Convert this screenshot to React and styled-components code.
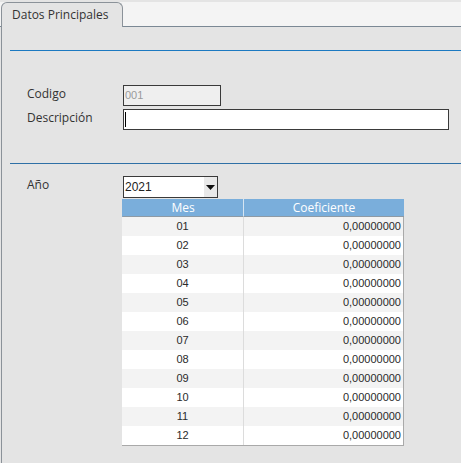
import React from 'react';
import styled, { createGlobalStyle } from 'styled-components';

const GlobalStyle = createGlobalStyle`
    html, body {
        margin: 0;
        padding: 0;
        background: #e4e4e4;
    }
    body {
        font-family: "Open Sans", "Liberation Sans", sans-serif;
    }
`;

const Page = styled.div`
    width: 461px;
    height: 463px;
    overflow: hidden;
    background: #e4e4e4;
    display: flex;
    flex-direction: column;
`;

const TabStrip = styled.div`
    margin-top: 2px;
    height: 24px;
    padding-left: 1px;
    display: flex;
    align-items: flex-end;
    background: #f4f4f4;
    border-bottom: 1px solid #7b8894;
`;

const Tab = styled.div`
    box-sizing: border-box;
    width: 122px;
    height: 25px;
    margin-bottom: -1px;
    padding: 3px 0 0 10px;
    background: #e4e4e4;
    border: 1px solid #8b9299;
    border-bottom: none;
    border-radius: 6px 6px 0 0;
    font-size: 12px;
    color: #333;
`;

const Panel = styled.div`
    flex: 1;
    margin-left: 1px;
    padding: 23px 0 0 8px;
    border-left: 1px solid #8b9299;
`;

const Rule = styled.div`
    height: 1px;
    background: ${({ $dark }) => ($dark ? '#2f70a6' : '#1c79c1')};
    margin-top: ${({ $top }) => $top}px;
`;

const FormGrid = styled.div`
    display: grid;
    grid-template-columns: 96px auto;
    grid-auto-rows: 21px;
    row-gap: 3px;
    margin: ${({ $top }) => $top}px 0 0 17px;
`;

const Label = styled.div`
    font-size: 12px;
    line-height: 17px;
    color: #333;
`;

const TextBox = styled.div`
    position: relative;
    box-sizing: border-box;
    width: ${({ $w }) => $w}px;
    height: 21px;
    border: 1px solid #3a3a3a;
    background: ${({ $disabled }) => ($disabled ? '#efefef' : '#fff')};
    font-family: "Liberation Sans", Arial, sans-serif;
    font-size: 11px;
    line-height: 19px;
    padding-left: 1px;
    color: ${({ $disabled }) => ($disabled ? '#9a9a9a' : '#222')};
`;

const Caret = styled.span`
    position: absolute;
    left: 1px;
    top: 2px;
    width: 1px;
    height: 15px;
    background: #000;
`;

const Select = styled.div`
    box-sizing: border-box;
    width: 95px;
    height: 22px;
    border: 1px solid #3a3a3a;
    background: #fff;
    display: flex;
    align-items: stretch;
    font-family: "Liberation Sans", Arial, sans-serif;
    font-size: 12px;
    color: #222;
`;

const SelectValue = styled.div`
    flex: 1;
    padding-left: 1px;
    line-height: 20px;
`;

const SelectButton = styled.div`
    width: 13px;
    background: #e9e9e9;
    display: flex;
    align-items: center;
    justify-content: center;
`;

const Table = styled.div`
    width: 282px;
    margin: 2px 0 0 112px;
    display: grid;
    grid-template-columns: 121px 161px;
    border-bottom: 1px solid #a9a9a9;
`;

const HeadCell = styled.div`
    height: 17px;
    line-height: 17px;
    background: #7aaedb;
    color: #fff;
    text-align: center;
    font-size: 12px;
    border-left: 1px solid ${({ $first }) => ($first ? '#7aaedb' : '#d6e5f2')};
    border-bottom: 1px solid #8d9aa5;
`;

const Cell = styled.div`
    height: 19px;
    line-height: 19px;
    box-sizing: border-box;
    background: ${({ $odd }) => ($odd ? '#f3f3f3' : '#fff')};
    font-family: "Liberation Sans", Arial, sans-serif;
    font-size: 11px;
    color: #2a2a2a;
    text-align: ${({ $right }) => ($right ? 'right' : 'center')};
    padding-right: ${({ $right }) => ($right ? '2px' : '0')};
    border-left: ${({ $right }) => ($right ? '1px solid #dcdcdc' : 'none')};
    border-right: ${({ $right }) => ($right ? '1px solid #a9a9a9' : 'none')};
`;

const months = ['01', '02', '03', '04', '05', '06', '07', '08', '09', '10', '11', '12'];

const App = () => {
    return (
        <Page>
            <GlobalStyle />
            <TabStrip>
                <Tab>Datos Principales</Tab>
            </TabStrip>
            <Panel>
                <Rule $top={0} />
                <FormGrid $top={34}>
                    <Label>Codigo</Label>
                    <TextBox $w={98} $disabled>001</TextBox>
                    <Label>Descripción</Label>
                    <TextBox $w={326}>
                        <Caret />
                    </TextBox>
                </FormGrid>
                <Rule $top={33} $dark />
                <FormGrid $top={12}>
                    <Label>Año</Label>
                    <Select>
                        <SelectValue>2021</SelectValue>
                        <SelectButton>
                            <svg width="9" height="5" viewBox="0 0 9 5">
                                <path d="M0 0 L9 0 L4.5 5 Z" fill="#111" />
                            </svg>
                        </SelectButton>
                    </Select>
                </FormGrid>
                <Table>
                    <HeadCell $first>Mes</HeadCell>
                    <HeadCell>Coeficiente</HeadCell>
                    {months.map((m, i) => (
                        <React.Fragment key={m}>
                            <Cell $odd={i % 2 === 0}>{m}</Cell>
                            <Cell $odd={i % 2 === 0} $right>0,00000000</Cell>
                        </React.Fragment>
                    ))}
                </Table>
            </Panel>
        </Page>
    );
};

export default App;
